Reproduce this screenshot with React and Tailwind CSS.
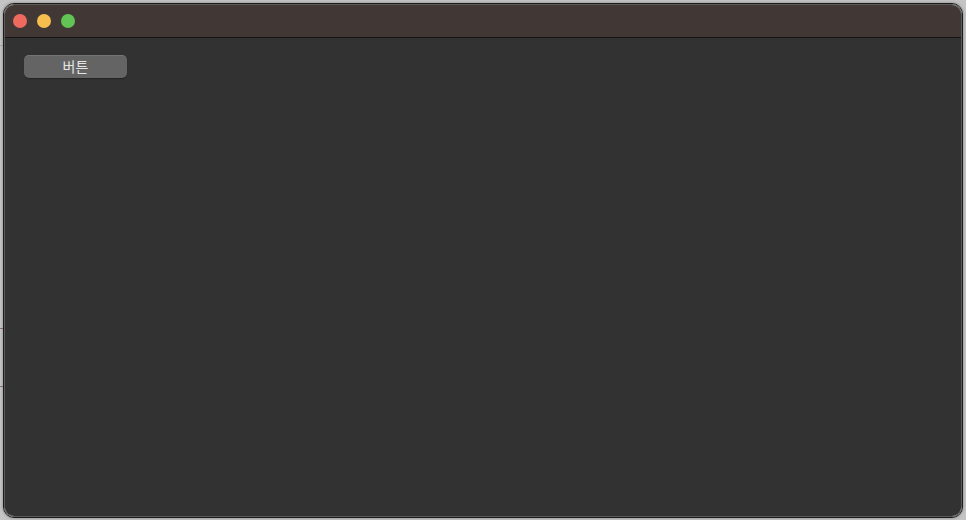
export default function App() {
  return (
    <div className="flex w-[966px] h-[520px] bg-[#c4c4c4] font-['Inter','Noto_Sans_CJK_KR',sans-serif]">
      {/* left backdrop strip with faint lines */}
      <div className="flex flex-col w-[3px] shrink-0">
        <div className="mt-[45px] h-px bg-[#a9a9a9]" />
        <div className="mt-[282px] h-px bg-[#8c726a]" />
        <div className="mt-[57px] h-px bg-[#8c726a]" />
      </div>

      {/* window */}
      <div className="mt-[3px] mb-[2px] w-[960px] shrink-0 rounded-[11px] border border-[#1b1b1b] shadow-[0_0_3px_rgba(0,0,0,0.35)]">
        <div className="flex h-full flex-col overflow-hidden rounded-[10px] border border-[#5b5b5b]">
          {/* title bar */}
          <div className="flex h-[33px] shrink-0 items-center gap-[10px] border-b border-[#141414] bg-[#413735] pl-[8px]">
            <span className="h-[14px] w-[14px] rounded-full bg-[#ee6a5f]" />
            <span className="h-[14px] w-[14px] rounded-full bg-[#f5be4f]" />
            <span className="h-[14px] w-[14px] rounded-full bg-[#61c454]" />
          </div>

          {/* content */}
          <div className="flex-1 bg-[#323232] pl-[19px] pt-[17px]">
            <button className="flex h-[23px] w-[103px] items-center justify-center rounded-[5px] border-t border-[#747474] bg-[#646464] pb-[2px] text-[14px] leading-none text-[#e4e4e4] shadow-[0_1px_1px_rgba(0,0,0,0.3)] font-['Noto_Sans_CJK_KR',sans-serif]">
              버튼
            </button>
          </div>
        </div>
      </div>
    </div>
  );
}
